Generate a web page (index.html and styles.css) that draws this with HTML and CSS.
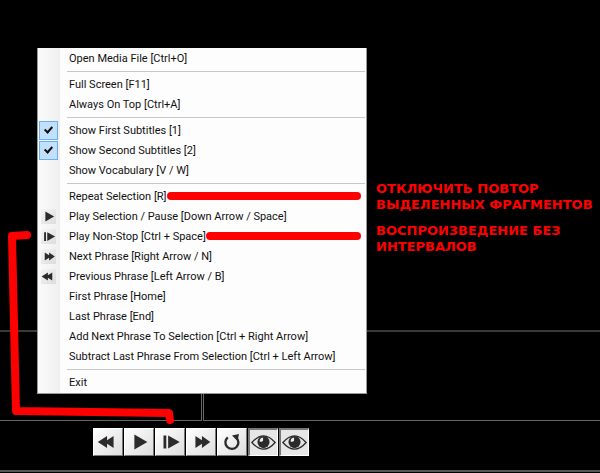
FILE: index.html
```
<!DOCTYPE html>
<html lang="en">
<head>
    <meta charset="UTF-8">
    <meta name="viewport" content="width=device-width, initial-scale=1.0">
    <title>Player</title>
    <link rel="stylesheet" href="styles.css">
</head>
<body>
    <!-- Shared icons -->
    <svg class="icon-defs" aria-hidden="true">
        <symbol id="icon-back" viewBox="0 0 30 28"><path d="M4 14L14 7.500V12L21 7.500V20.500L14 16V20.500Z"/></symbol>
        <symbol id="icon-play" viewBox="0 0 30 28"><path d="M10 6L24 14L10 22Z"/></symbol>
        <symbol id="icon-nonstop" viewBox="0 0 30 28"><path d="M8 7h3v14H8zM13 7L25.500 14L13 21Z"/></symbol>
        <symbol id="icon-next" viewBox="0 0 30 28"><path d="M25 14L16 7.500V12L9 7.500V20.500L16 16V20.500Z"/></symbol>
        <symbol id="icon-repeat" viewBox="0 0 30 28"><path class="line" d="M10.500 9A7 7 0 1 0 19.500 9.200"/><path d="M15 7L22.500 5.500L21 13Z"/></symbol>
        <symbol id="icon-eye" viewBox="0 0 30 28"><path class="thin" d="M2 14Q15 -1 28 14Q15 29 2 14Z"/><circle cx="15" cy="13.500" r="6.800"/><path class="shine" d="M10.500 12.500Q11 9 14.500 8.500V12Q13 14 10.500 12.500Z"/></symbol>
    </svg>

    <main class="player">
        <div class="video"></div>
        <div class="subtitles">
            <div class="pane pane-first"></div>
            <div class="pane pane-second"></div>
        </div>
        <div class="toolbar">
            <button class="tool" aria-label="Previous Phrase"><svg><use href="#icon-back"/></svg></button>
            <button class="tool" aria-label="Play Selection"><svg><use href="#icon-play"/></svg></button>
            <button class="tool" aria-label="Play Non-Stop"><svg><use href="#icon-nonstop"/></svg></button>
            <button class="tool" aria-label="Next Phrase"><svg><use href="#icon-next"/></svg></button>
            <button class="tool" aria-label="Repeat Selection"><svg><use href="#icon-repeat"/></svg></button>
            <button class="tool pressed" aria-label="First Subtitles" aria-pressed="true"><svg><use href="#icon-eye"/></svg></button>
            <button class="tool pressed" aria-label="Second Subtitles" aria-pressed="true"><svg><use href="#icon-eye"/></svg></button>
        </div>
    </main>

    <!-- Context menu -->
    <div class="menu">
        <button class="item"><span class="gutter"></span>Open Media File [Ctrl+O]</button>
        <hr>
        <button class="item"><span class="gutter"></span>Full Screen [F11]</button>
        <button class="item"><span class="gutter"></span>Always On Top [Ctrl+A]</button>
        <hr>
        <label class="item"><span class="gutter"><input type="checkbox" checked></span>Show First Subtitles [1]</label>
        <label class="item"><span class="gutter"><input type="checkbox" checked></span>Show Second Subtitles [2]</label>
        <label class="item"><span class="gutter"><input type="checkbox"></span>Show Vocabulary [V / W]</label>
        <hr>
        <button class="item"><span class="gutter"></span>Repeat Selection [R]<span class="strike"></span></button>
        <button class="item"><span class="gutter"><svg viewBox="3 2 24 24"><use href="#icon-play" width="30" height="28"/></svg></span>Play Selection / Pause [Down Arrow / Space]</button>
        <button class="item"><span class="gutter"><svg viewBox="3 2 24 24"><use href="#icon-nonstop" width="30" height="28"/></svg></span>Play Non-Stop [Ctrl + Space]<span class="strike"></span></button>
        <button class="item"><span class="gutter"><svg viewBox="3 2 24 24"><use href="#icon-next" width="30" height="28"/></svg></span>Next Phrase [Right Arrow / N]</button>
        <button class="item"><span class="gutter"><svg viewBox="3 2 24 24"><use href="#icon-back" width="30" height="28"/></svg></span>Previous Phrase [Left Arrow / B]</button>
        <button class="item"><span class="gutter"></span>First Phrase [Home]</button>
        <button class="item"><span class="gutter"></span>Last Phrase [End]</button>
        <button class="item"><span class="gutter"></span>Add Next Phrase To Selection [Ctrl + Right Arrow]</button>
        <button class="item"><span class="gutter"></span>Subtract Last Phrase From Selection [Ctrl + Left Arrow]</button>
        <hr>
        <button class="item"><span class="gutter"></span>Exit</button>
    </div>

    <!-- Notes -->
    <div class="notes" lang="ru">
        <p>ОТКЛЮЧИТЬ ПОВТОР<br>ВЫДЕЛЕННЫХ ФРАГМЕНТОВ</p>
        <p>ВОСПРОИЗВЕДЕНИЕ БЕЗ<br>ИНТЕРВАЛОВ</p>
    </div>
    <svg class="connector" viewBox="0 0 180 200" aria-hidden="true">
        <path d="M27 9L12 10L16 185L169 187L170 194"/>
    </svg>
</body>
</html>
```

FILE: styles.css
```
body {
    margin: 0;
    background: #000;
    font-family: Roboto, "Noto Sans", sans-serif;
    font-size: 11px;
}
.icon-defs {
    position: absolute;
    width: 0;
    height: 0;
}
.line {
    fill: none;
    stroke: #2b2b2b;
    stroke-width: 2.5;
}
.thin {
    fill: none;
    stroke: #2b2b2b;
    stroke-width: 1.5;
}
.shine {
    fill: #eee;
}

/* Player */
.player {
    display: flex;
    flex-direction: column;
    box-sizing: border-box;
    height: 100vh;
    padding-bottom: 1px;
}
.video {
    flex: 1;
}
.subtitles {
    display: grid;
    grid-template-columns: 202px 1fr;
    gap: 1px;
    height: 89px;
    border-top: 2px solid #3a3a3a;
}
.pane {
    border-bottom: 1px solid #666;
}
.pane-first {
    border-right: 1px solid #666;
}
.pane-second {
    border-left: 1px solid #666;
}
.toolbar {
    display: flex;
    gap: 1px;
    padding: 7px 93px 14px;
    border-bottom: 2px solid #555;
}
.tool {
    box-sizing: border-box;
    width: 30px;
    height: 28px;
    padding: 0;
    border: 1px solid #fff;
    border-right-color: #777;
    border-bottom-color: #777;
    background: linear-gradient(135deg, #fff, #ddd);
}
.tool svg {
    display: block;
    width: 100%;
    height: 100%;
    fill: #2b2b2b;
}
.tool.pressed {
    border: 1px solid #fff;
    border-top: 2px solid #777;
    border-left: 2px solid #777;
    background: #e6e6e6;
}

/* Menu */
.menu {
    position: absolute;
    top: 48px;
    left: 37px;
    box-sizing: border-box;
    width: 330px;
    padding-bottom: 1px;
    border: 1px solid #999;
    border-top: none;
    background: linear-gradient(to right, #fbfbfb, #efefef 22px, #fdfdfd 22px);
}
.menu hr {
    height: 1px;
    margin: 3px 1px 2px 29px;
    border: none;
    background: #c8c8c8;
}
.item {
    display: flex;
    align-items: center;
    box-sizing: border-box;
    width: 100%;
    height: 20px;
    padding: 0;
    border: none;
    background: none;
    color: #111;
    font: inherit;
    white-space: nowrap;
}
.gutter {
    display: flex;
    justify-content: center;
    width: 20px;
    margin-right: 11px;
}
.gutter svg {
    width: 15px;
    height: 15px;
    background: linear-gradient(135deg, #f6f6f6, #dcdcdc);
    fill: #2b2b2b;
}
.gutter input {
    appearance: none;
    display: flex;
    justify-content: center;
    box-sizing: border-box;
    width: 19px;
    height: 19px;
    margin: 0;
}
.gutter input:checked {
    border: 1px solid #66b2f5;
    background: #c2e0fb;
}
.gutter input:checked::after {
    content: "";
    width: 3px;
    height: 6px;
    margin-top: 3px;
    border: solid #111;
    border-width: 0 2px 2px 0;
    transform: rotate(42deg);
}
.strike {
    flex: 1;
    height: 8px;
    margin-right: 5px;
    border-radius: 4px;
    background: #f00;
}

/* Notes */
.notes {
    position: absolute;
    top: 181px;
    left: 376px;
    color: #f00;
    font: bold 13px/16px "DejaVu Sans", sans-serif;
    white-space: nowrap;
}
.notes p {
    margin: 0 0 10px;
}
.connector {
    position: absolute;
    top: 226px;
    left: 0;
    width: 180px;
    height: 200px;
    fill: none;
    stroke: #f00;
    stroke-width: 8;
    stroke-linecap: round;
    stroke-linejoin: round;
}
```
